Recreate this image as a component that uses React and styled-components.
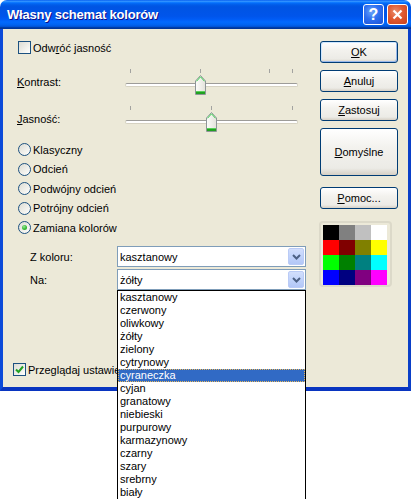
import styled, { createGlobalStyle } from "styled-components";

const GlobalStyle = createGlobalStyle`
  html, body {
    margin: 0;
    background: #fff;
    font-family: "Liberation Sans", Arial, sans-serif;
    font-size: 11px;
    color: #000;
  }
`;

const Page = styled.div`
  min-height: 499px;
  overflow: hidden;
`;

const Window = styled.div`
  width: 411px;
  height: 391px;
  display: flex;
  flex-direction: column;
`;

const TitleBar = styled.div`
  height: 29px;
  flex: none;
  display: flex;
  align-items: center;
  gap: 3px;
  padding: 0 3px 0 7px;
  border-radius: 7px 7px 0 0;
  background: linear-gradient(
    to bottom,
    #0058ee 0%,
    #3593ff 4%,
    #288eff 6%,
    #127dff 8%,
    #036ffc 10%,
    #0262ee 14%,
    #0057e5 20%,
    #0054e3 24%,
    #0055eb 56%,
    #005bf5 66%,
    #026afe 76%,
    #0062ef 86%,
    #0052d6 92%,
    #0040ab 94%,
    #003092 100%
  );
`;

const Title = styled.div`
  flex: 1;
  color: #fff;
  font-weight: bold;
  font-size: 13px;
  letter-spacing: -0.2px;
  text-shadow: 1px 1px #0f1089;
  padding-bottom: 1px;
`;

const CapButton = styled.div`
  width: 21px;
  height: 21px;
  box-sizing: border-box;
  border: 1px solid #fff;
  border-radius: 3px;
  display: flex;
  align-items: center;
  justify-content: center;
  color: #fff;
  font-weight: bold;
  font-size: 16px;
  background: ${(p) =>
    p.$close
      ? "radial-gradient(circle at 40% 35%, #e98e6d 0%, #e05a32 45%, #c7401a 100%)"
      : "radial-gradient(circle at 40% 35%, #6da3f8 0%, #2e6ff0 45%, #1a52d6 100%)"};
`;

const Frame = styled.div`
  flex: 1;
  display: flex;
  background: #ece9d8;
  border: 3px solid #0a48dc;
  border-top: none;
  border-bottom-width: 4px;
  border-left-color: #0b4ad9;
  border-right-color: #0a3fc8;
  border-bottom-color: #0935c0;
`;

const LeftCol = styled.div`
  width: 317px;
  display: flex;
  flex-direction: column;
  padding: 12px 0 11px;
  box-sizing: border-box;
`;

const RightCol = styled.div`
  width: 78px;
  display: flex;
  flex-direction: column;
  padding-top: 12px;
`;

const CheckRow = styled.label`
  display: flex;
  align-items: center;
  gap: 2px;
  height: 13px;
  padding-left: ${(p) => p.$indent}px;
  margin-top: ${(p) => p.$top || 0}px;
  white-space: nowrap;
`;

const Box = styled.span`
  width: 13px;
  height: 13px;
  flex: none;
  box-sizing: border-box;
  border: 1px solid #1c5180;
  background: linear-gradient(135deg, #dcdcd4 0%, #f4f4f0 70%, #fff 100%);
  display: flex;
  align-items: center;
  justify-content: center;
`;

const SliderRow = styled.div`
  display: flex;
  align-items: center;
  height: 28px;
  margin-top: ${(p) => p.$top}px;
  padding-left: 14px;
`;

const SliderLabel = styled.span`
  width: 108px;
  margin-top: -1px;
`;

const SliderBox = styled.div`
  position: relative;
  width: 173px;
  height: 28px;
`;

const Tick = styled.span`
  position: absolute;
  top: 1px;
  width: 1px;
  height: 4px;
  background: #a3a3a0;
`;

const Track = styled.div`
  position: absolute;
  left: 0;
  right: 0;
  top: 15px;
  height: 4px;
  box-sizing: border-box;
  border: 1px solid #d6d2c2;
  border-top-color: #9d9c99;
  border-radius: 2px;
  background: #fff;
`;

const ThumbWrap = styled.span`
  position: absolute;
  top: 7px;
  width: 11px;
  height: 20px;
  display: block;
`;

const RadioGroup = styled.div`
  display: flex;
  flex-direction: column;
  margin-top: 7px;
`;

const RadioRow = styled.label`
  display: flex;
  align-items: center;
  gap: 2px;
  height: 19.5px;
  padding-left: 15px;
`;

const Radio = styled.span`
  width: 13px;
  height: 13px;
  flex: none;
  box-sizing: border-box;
  border: 1px solid #1c5180;
  border-radius: 50%;
  background: linear-gradient(135deg, #dcdcd4 0%, #f4f4f0 70%, #fff 100%);
  display: flex;
  align-items: center;
  justify-content: center;
`;

const Dot = styled.span`
  width: 5px;
  height: 5px;
  border-radius: 50%;
  background: radial-gradient(circle at 40% 35%, #9be39a 0%, #3cbf3a 50%, #1f9a1c 100%);
`;

const ComboRow = styled.div`
  display: flex;
  align-items: center;
  height: 21px;
  padding-left: 27px;
  margin-top: ${(p) => p.$top}px;
`;

const ComboLabel = styled.span`
  width: 87px;
`;

const ComboWrap = styled.div`
  position: relative;
  width: 189px;
`;

const Combo = styled.div`
  height: 21px;
  box-sizing: border-box;
  border: 1px solid #7f9db9;
  background: #fff;
  display: flex;
  align-items: center;
  padding: 0 1px 0 2px;
`;

const ComboText = styled.span`
  flex: 1;
`;

const ComboButton = styled.span`
  width: 16px;
  height: 17px;
  box-sizing: border-box;
  border: 1px solid #bacbf6;
  border-radius: 2px;
  background: linear-gradient(to bottom, #d2defc 0%, #c1d3fb 50%, #b3c7f7 100%);
  display: flex;
  align-items: center;
  justify-content: center;
`;

const List = styled.ul`
  position: absolute;
  top: 100%;
  left: 0;
  width: 100%;
  margin: 0;
  padding: 0;
  list-style: none;
  box-sizing: border-box;
  border: 1px solid #000;
  background: #fff;
  z-index: 10;
`;

const Item = styled.li`
  height: 13px;
  line-height: 13px;
  padding-left: 2px;
  box-sizing: border-box;
  white-space: nowrap;
  ${(p) =>
    p.$selected &&
    `
    background: #316ac5;
    color: #fff;
    outline: 1px dotted #e8b85c;
    outline-offset: -1px;
  `}
`;

const Button = styled.div`
  height: ${(p) => p.$h || 22}px;
  margin-top: ${(p) => p.$top || 0}px;
  box-sizing: border-box;
  border: 1px solid #003c74;
  border-radius: 3px;
  background: linear-gradient(to bottom, #fff 0%, #f3f2ee 40%, #ecebe6 85%, #d6d0c5 100%);
  display: flex;
  align-items: center;
  justify-content: center;
  box-shadow: ${(p) =>
    p.$default ? "inset 1px 1px #cee7ff, inset -1px -1px #98b8ea" : "none"};
`;

const Palette = styled.div`
  width: 73px;
  height: 66px;
  margin: 12px 0 0 -1px;
  box-sizing: border-box;
  border: 2px solid #dcd9c9;
  border-radius: 4px;
  padding: 2px;
`;

const Swatches = styled.div`
  display: grid;
  grid-template-columns: repeat(4, 16px);
  grid-auto-rows: 15px;
`;

const Swatch = styled.span`
  background: ${(p) => p.$c};
`;

const Check = () => (
  <svg width="9" height="9" viewBox="0 0 9 9">
    <path d="M1 4.5 L3.5 7 L8 1.5" fill="none" stroke="#21a121" strokeWidth="2" />
  </svg>
);

const Thumb = ({ left }) => (
  <ThumbWrap style={{ left }}>
    <svg width="11" height="20" viewBox="0 0 11 20">
      <defs>
        <linearGradient id="tg" x1="0" y1="0" x2="1" y2="0">
          <stop offset="0" stopColor="#fdfdfb" />
          <stop offset="1" stopColor="#e3e2db" />
        </linearGradient>
      </defs>
      <path d="M0.5 6 L5.5 0.5 L10.5 6 V19.5 H0.5 Z" fill="url(#tg)" stroke="#8e9597" />
      <path d="M1.5 6.3 L5.5 1.8 L9.5 6.3" fill="none" stroke="#3dd14f" />
      <rect x="1" y="16" width="9" height="3" fill="#21a121" />
      <rect x="1" y="16" width="9" height="1" fill="#5ad05a" />
    </svg>
  </ThumbWrap>
);

const Slider = ({ ticks, thumb }) => (
  <SliderBox>
    {ticks.map((t) => (
      <Tick key={t} style={{ left: t }} />
    ))}
    <Track />
    <Thumb left={thumb} />
  </SliderBox>
);

const Chevron = () => (
  <svg width="9" height="6" viewBox="0 0 9 6">
    <path d="M1 1 L4.5 4.5 L8 1" fill="none" stroke="#4d6185" strokeWidth="2" />
  </svg>
);

const colors = [
  "#000000", "#808080", "#c0c0c0", "#ffffff",
  "#ff0000", "#800000", "#808000", "#ffff00",
  "#00ff00", "#008000", "#008080", "#00ffff",
  "#0000ff", "#000080", "#800080", "#ff00ff",
];

const names = [
  "kasztanowy", "czerwony", "oliwkowy", "żółty", "zielony", "cytrynowy",
  "cyraneczka", "cyjan", "granatowy", "niebieski", "purpurowy", "karmazynowy",
  "czarny", "szary", "srebrny", "biały",
];

const radios = ["Klasyczny", "Odcień", "Podwójny odcień", "Potrójny odcień", "Zamiana kolorów"];

export default function App() {
  return (
    <Page>
      <GlobalStyle />
      <Window>
        <TitleBar>
          <Title>Własny schemat kolorów</Title>
          <CapButton>?</CapButton>
          <CapButton $close>
            <svg width="11" height="11" viewBox="0 0 11 11">
              <path d="M1.5 1.5 L9.5 9.5 M9.5 1.5 L1.5 9.5" stroke="#fff" strokeWidth="2.2" />
            </svg>
          </CapButton>
        </TitleBar>
        <Frame>
          <LeftCol>
            <CheckRow $indent={15}>
              <Box />
              <span>Odw<u>r</u>óć jasność</span>
            </CheckRow>
            <SliderRow $top={14}>
              <SliderLabel><u>K</u>ontrast:</SliderLabel>
              <Slider ticks={[5, 75, 144, 167]} thumb={70} />
            </SliderRow>
            <SliderRow $top={9}>
              <SliderLabel><u>J</u>asność:</SliderLabel>
              <Slider ticks={[5, 86, 167]} thumb={81} />
            </SliderRow>
            <RadioGroup>
              {radios.map((r, i) => (
                <RadioRow key={r}>
                  <Radio>{i === 4 && <Dot />}</Radio>
                  <span>{r}</span>
                </RadioRow>
              ))}
            </RadioGroup>
            <ComboRow $top={8.5}>
              <ComboLabel>Z koloru:</ComboLabel>
              <ComboWrap>
                <Combo>
                  <ComboText>kasztanowy</ComboText>
                  <ComboButton><Chevron /></ComboButton>
                </Combo>
              </ComboWrap>
            </ComboRow>
            <ComboRow $top={2}>
              <ComboLabel>Na:</ComboLabel>
              <ComboWrap>
                <Combo>
                  <ComboText>żółty</ComboText>
                  <ComboButton><Chevron /></ComboButton>
                </Combo>
                <List>
                  {names.map((n) => (
                    <Item key={n} $selected={n === "cyraneczka"}>{n}</Item>
                  ))}
                </List>
              </ComboWrap>
            </ComboRow>
            <CheckRow $indent={10} style={{ marginTop: "auto" }}>
              <Box><Check /></Box>
              <span>Przeglądaj ustawienia</span>
            </CheckRow>
          </LeftCol>
          <RightCol>
            <Button $default><span><u>O</u>K</span></Button>
            <Button $top={7}><span><u>A</u>nuluj</span></Button>
            <Button $top={7}><span><u>Z</u>astosuj</span></Button>
            <Button $top={7} $h={48}><span><u>D</u>omyślne</span></Button>
            <Button $top={11}><span><u>P</u>omoc...</span></Button>
            <Palette>
              <Swatches>
                {colors.map((c, i) => (
                  <Swatch key={i} $c={c} />
                ))}
              </Swatches>
            </Palette>
          </RightCol>
        </Frame>
      </Window>
    </Page>
  );
}
